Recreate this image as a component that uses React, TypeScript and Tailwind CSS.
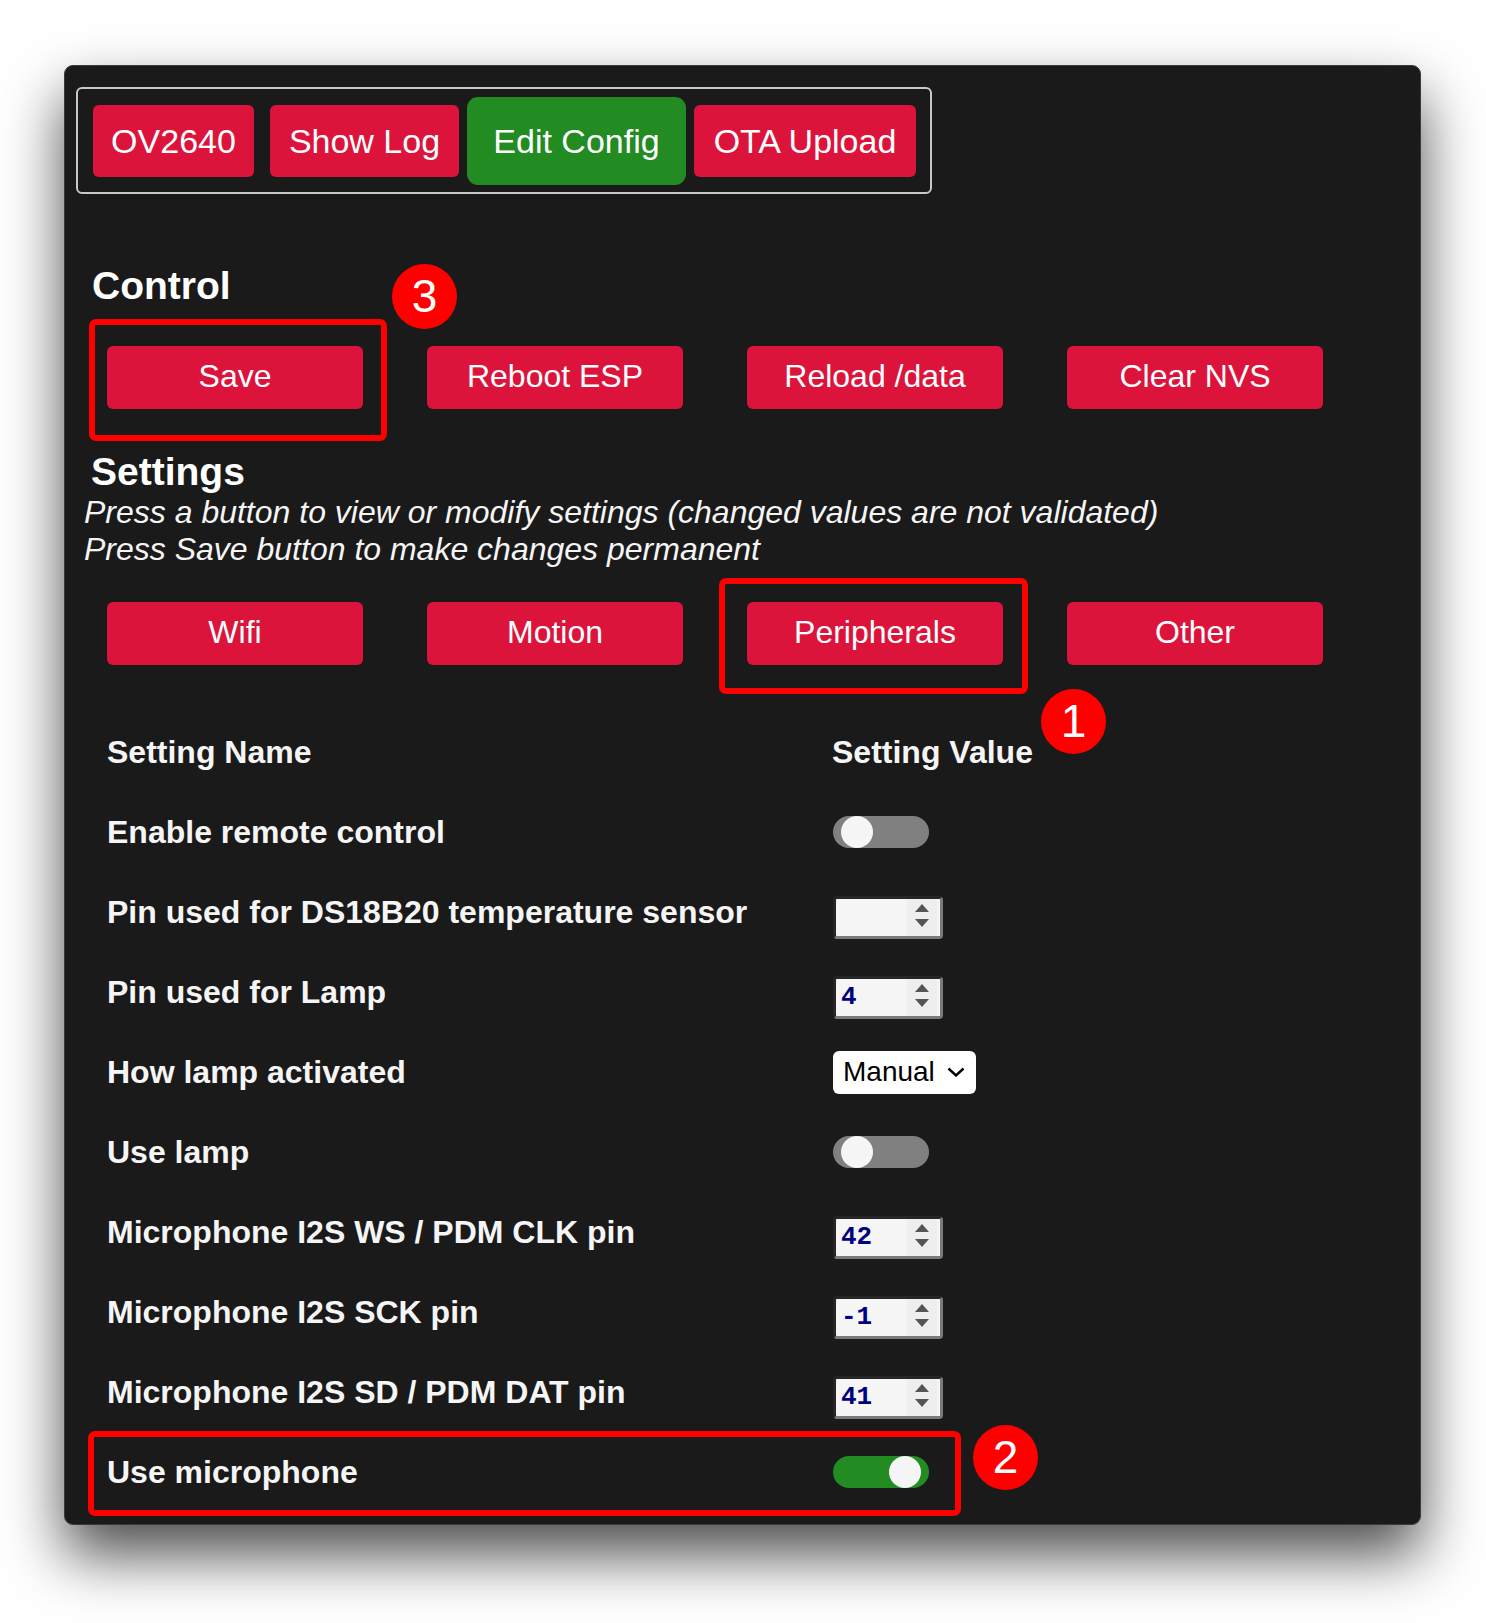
import React from 'react';

type Row =
  | { name: string; kind: 'toggle'; on: boolean }
  | { name: string; kind: 'number'; value: string }
  | { name: string; kind: 'select'; value: string };

const navItems = [
  { label: 'OV2640', w: 'w-[161px]' },
  { label: 'Show Log', w: 'w-[189px]' },
  { label: 'Edit Config', w: 'w-[219px]', active: true },
  { label: 'OTA Upload', w: 'w-[222px]' },
];

const controlButtons = ['Save', 'Reboot ESP', 'Reload /data', 'Clear NVS'];
const settingButtons = ['Wifi', 'Motion', 'Peripherals', 'Other'];

const rows: Row[] = [
  { name: 'Enable remote control', kind: 'toggle', on: false },
  { name: 'Pin used for DS18B20 temperature sensor', kind: 'number', value: '' },
  { name: 'Pin used for Lamp', kind: 'number', value: '4' },
  { name: 'How lamp activated', kind: 'select', value: 'Manual' },
  { name: 'Use lamp', kind: 'toggle', on: false },
  { name: 'Microphone I2S WS / PDM CLK pin', kind: 'number', value: '42' },
  { name: 'Microphone I2S SCK pin', kind: 'number', value: '-1' },
  { name: 'Microphone I2S SD / PDM DAT pin', kind: 'number', value: '41' },
  { name: 'Use microphone', kind: 'toggle', on: true },
];

const Toggle: React.FC<{ on: boolean }> = ({ on }) => (
  <div
    className={`w-[96px] h-[32px] rounded-full flex px-[8px] ${
      on ? 'bg-[#228b22] justify-end' : 'bg-[#808080] justify-start'
    }`}
  >
    <div className="w-[32px] h-[32px] rounded-full bg-[#f5f5f5]" />
  </div>
);

const NumberInput: React.FC<{ value: string }> = ({ value }) => (
  <div className="mt-[10px] w-[110px] h-[43px] rounded-[4px] border-[3px] border-t-[#262626] border-l-[#262626] border-r-[#7a7a7a] border-b-[#7a7a7a] bg-[#f5f5f5] flex items-center">
    <span className="flex-1 pl-[5px] font-['Liberation_Mono','Courier_New',monospace] font-bold text-[26px] leading-none text-[#000080]">
      {value}
    </span>
    <div className="w-[30px] h-full mr-[3px] bg-[#eeeeee] flex flex-col items-center justify-center gap-[7px] pb-[3px]">
      <svg width="14" height="8" viewBox="0 0 14 8">
        <path d="M0 8 L7 0 L14 8 Z" fill="#555" />
      </svg>
      <svg width="14" height="8" viewBox="0 0 14 8">
        <path d="M0 0 L14 0 L7 8 Z" fill="#555" />
      </svg>
    </div>
  </div>
);

const Select: React.FC<{ value: string }> = ({ value }) => (
  <div className="w-[143px] h-[43px] rounded-[6px] bg-white flex items-center pl-[10px] pr-[11px] justify-between">
    <span className="text-[28px] text-black leading-none">{value}</span>
    <svg width="18" height="10" viewBox="0 0 18 10">
      <path d="M1.5 1.5 L9 8.5 L16.5 1.5" fill="none" stroke="#000" strokeWidth="2.4" />
    </svg>
  </div>
);

const Badge: React.FC<{ n: string; className: string }> = ({ n, className }) => (
  <div
    className={`absolute w-[65px] h-[65px] rounded-full bg-[#ff0000] flex items-center justify-center text-white text-[46px] leading-none pb-[2px] ${className}`}
  >
    {n}
  </div>
);

const RedButton: React.FC<{ label: string }> = ({ label }) => (
  <button className="w-[256px] h-[63px] rounded-[6px] bg-[#dc143c] text-white text-[32px] leading-none flex items-center justify-center pb-[3px]">
    {label}
  </button>
);

export default function App() {
  return (
    <div className="min-h-screen bg-white pl-[64px] pt-[65px] font-['Liberation_Sans',Arial,sans-serif] text-[#f5f5f5]">
      <div className="relative w-[1357px] rounded-[9px] bg-[#1a1a1a] border border-[#3a3a3a] pb-[12px] shadow-[0_30px_60px_rgba(0,0,0,0.7)]">
        {/* top navigation */}
        <div className="ml-[11px] mt-[21px] inline-flex items-center gap-[16px] border-2 border-[#c8c8c8] rounded-[6px] pl-[15px] pr-[14px] pt-[16px] pb-[15px]">
          {navItems.map((item) => (
            <button
              key={item.label}
              className={`${item.w} flex items-center justify-center text-white text-[34px] leading-none ${
                item.active
                  ? 'h-[88px] -mx-[8px] -my-[8px] bg-[#228b22] rounded-[11px]'
                  : 'h-[72px] bg-[#dc143c] rounded-[6px]'
              }`}
            >
              {item.label}
            </button>
          ))}
        </div>

        {/* control */}
        <h3 className="mt-[70px] ml-[27px] text-[39px] leading-[44px] font-bold text-white">Control</h3>
        <div className="mt-[38px] ml-[42px] flex gap-[64px]">
          {controlButtons.map((b) => (
            <RedButton key={b} label={b} />
          ))}
        </div>

        {/* settings */}
        <h3 className="mt-[41px] ml-[26px] text-[39px] leading-[44px] font-bold text-white">Settings</h3>
        <div className="ml-[19px] italic text-[32px] leading-[37px]">
          <div>Press a button to view or modify settings (changed values are not validated)</div>
          <div>Press Save button to make changes permanent</div>
        </div>
        <div className="mt-[34px] ml-[42px] flex gap-[64px]">
          {settingButtons.map((b) => (
            <RedButton key={b} label={b} />
          ))}
        </div>

        {/* table */}
        <div className="mt-[47px] ml-[42px] flex flex-col text-[32px] font-bold">
          <div className="h-[80px] flex items-center">
            <div className="w-[725px]">Setting Name</div>
            <div>Setting Value</div>
          </div>
          {rows.map((r) => (
            <div key={r.name} className="h-[80px] flex items-center">
              <div className="w-[725px]">{r.name}</div>
              <div className="flex items-center font-normal pl-[1px]">
                {r.kind === 'toggle' && <Toggle on={r.on} />}
                {r.kind === 'number' && <NumberInput value={r.value} />}
                {r.kind === 'select' && <Select value={r.value} />}
              </div>
            </div>
          ))}
        </div>

        {/* annotations */}
        <div className="absolute left-[24px] top-[253px] w-[298px] h-[122px] border-[6px] border-[#ff0000] rounded-[7px]" />
        <Badge n="3" className="left-[327px] top-[198px]" />
        <div className="absolute left-[654px] top-[512px] w-[309px] h-[116px] border-[6px] border-[#ff0000] rounded-[7px]" />
        <Badge n="1" className="left-[976px] top-[623px]" />
        <div className="absolute left-[23px] top-[1365px] w-[873px] h-[85px] border-[6px] border-[#ff0000] rounded-[7px]" />
        <Badge n="2" className="left-[908px] top-[1359px]" />
      </div>
    </div>
  );
}
